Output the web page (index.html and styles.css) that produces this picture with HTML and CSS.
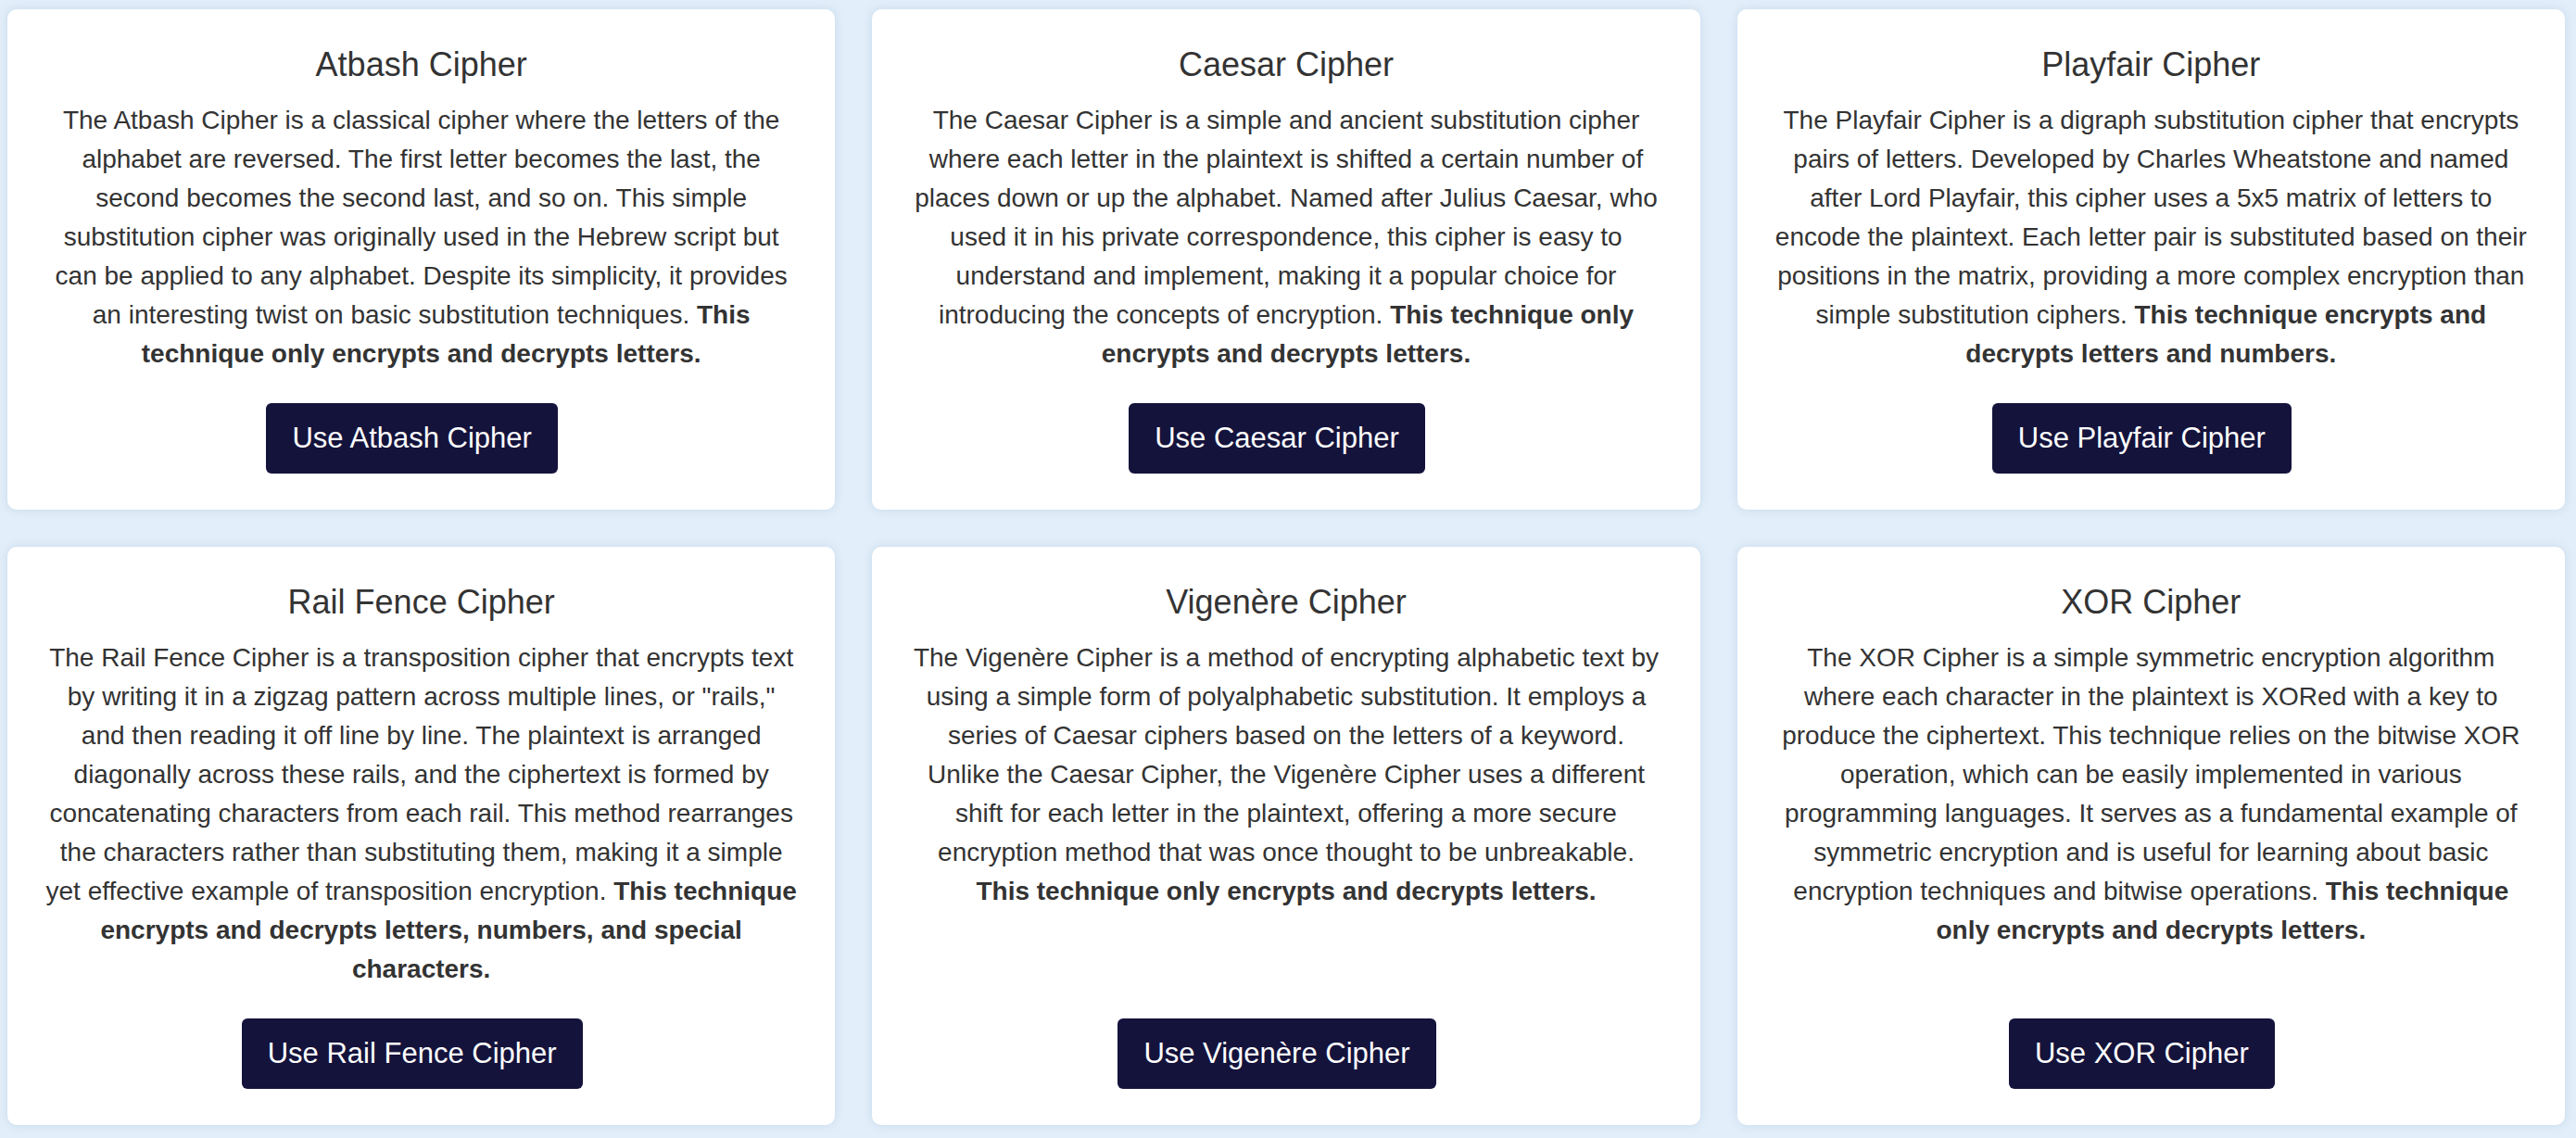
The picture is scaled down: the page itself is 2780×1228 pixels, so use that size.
FILE: index.html
```html
<!DOCTYPE html>
<html lang="en">
<head>
<meta charset="utf-8">
<title>Ciphers</title>
<link rel="stylesheet" href="styles.css">
</head>
<body>
<main class="grid">
  <section class="card">
    <h2 class="card-title">Atbash Cipher</h2>
    <p class="card-text">The Atbash Cipher is a classical cipher where the letters of the alphabet are reversed. The first letter becomes the last, the second becomes the second last, and so on. This simple substitution cipher was originally used in the Hebrew script but can be applied to any alphabet. Despite its simplicity, it provides an interesting twist on basic substitution techniques. <strong>This technique only encrypts and decrypts letters.</strong></p>
    <button class="card-btn" type="button">Use Atbash Cipher</button>
  </section>
  <section class="card">
    <h2 class="card-title">Caesar Cipher</h2>
    <p class="card-text">The Caesar Cipher is a simple and ancient substitution cipher where each letter in the plaintext is shifted a certain number of places down or up the alphabet. Named after Julius Caesar, who used it in his private correspondence, this cipher is easy to understand and implement, making it a popular choice for introducing the concepts of encryption. <strong>This technique only encrypts and decrypts letters.</strong></p>
    <button class="card-btn" type="button">Use Caesar Cipher</button>
  </section>
  <section class="card">
    <h2 class="card-title">Playfair Cipher</h2>
    <p class="card-text">The Playfair Cipher is a digraph substitution cipher that encrypts pairs of letters. Developed by Charles Wheatstone and named after Lord Playfair, this cipher uses a 5x5 matrix of letters to encode the plaintext. Each letter pair is substituted based on their positions in the matrix, providing a more complex encryption than simple substitution ciphers. <strong>This technique encrypts and decrypts letters and numbers.</strong></p>
    <button class="card-btn" type="button">Use Playfair Cipher</button>
  </section>
  <section class="card">
    <h2 class="card-title">Rail Fence Cipher</h2>
    <p class="card-text">The Rail Fence Cipher is a transposition cipher that encrypts text by writing it in a zigzag pattern across multiple lines, or "rails," and then reading it off line by line. The plaintext is arranged diagonally across these rails, and the ciphertext is formed by concatenating characters from each rail. This method rearranges the characters rather than substituting them, making it a simple yet effective example of transposition encryption. <strong>This technique encrypts and decrypts letters, numbers, and special characters.</strong></p>
    <button class="card-btn" type="button">Use Rail Fence Cipher</button>
  </section>
  <section class="card">
    <h2 class="card-title">Vigenère Cipher</h2>
    <p class="card-text">The Vigenère Cipher is a method of encrypting alphabetic text by using a simple form of polyalphabetic substitution. It employs a series of Caesar ciphers based on the letters of a keyword. Unlike the Caesar Cipher, the Vigenère Cipher uses a different shift for each letter in the plaintext, offering a more secure encryption method that was once thought to be unbreakable. <strong>This technique only encrypts and decrypts letters.</strong></p>
    <button class="card-btn" type="button">Use Vigenère Cipher</button>
  </section>
  <section class="card">
    <h2 class="card-title">XOR Cipher</h2>
    <p class="card-text">The XOR Cipher is a simple symmetric encryption algorithm where each character in the plaintext is XORed with a key to produce the ciphertext. This technique relies on the bitwise XOR operation, which can be easily implemented in various programming languages. It serves as a fundamental example of symmetric encryption and is useful for learning about basic encryption techniques and bitwise operations. <strong>This technique only encrypts and decrypts letters.</strong></p>
    <button class="card-btn" type="button">Use XOR Cipher</button>
  </section>
</main>
</body>
</html>
```
FILE: styles.css
```css
html, body {
  margin: 0;
  padding: 0;
}

body {
  background: #e2eef9;
  font-family: "Liberation Sans", Arial, sans-serif;
  color: #333333;
}

.grid {
  display: grid;
  grid-template-columns: repeat(3, 1fr);
  gap: 40px;
  padding: 10px 12px 13px 8px;
}

.card {
  background: #ffffff;
  border-radius: 10px;
  box-shadow: 0 0 10px rgba(150, 180, 215, 0.35);
  padding: 39px;
  display: flex;
  flex-direction: column;
  align-items: center;
  justify-content: flex-start;
  text-align: center;
}

.card-title {
  margin: 0 0 18px 0;
  font-size: 36px;
  line-height: 42px;
  font-weight: 400;
  color: #333333;
}

.card-text {
  margin: 0 0 32px 0;
  flex-grow: 1;
  font-size: 28px;
  line-height: 42px;
  color: #333333;
}

.card-text strong {
  font-weight: 700;
}

.card-btn {
  margin: 0 20px 0 0;
  font-family: "Liberation Sans", Arial, sans-serif;
  font-size: 31px;
  line-height: 36px;
  color: #ffffff;
  background: #14133c;
  border: none;
  border-radius: 6px;
  padding: 20px 28px;
}
```
